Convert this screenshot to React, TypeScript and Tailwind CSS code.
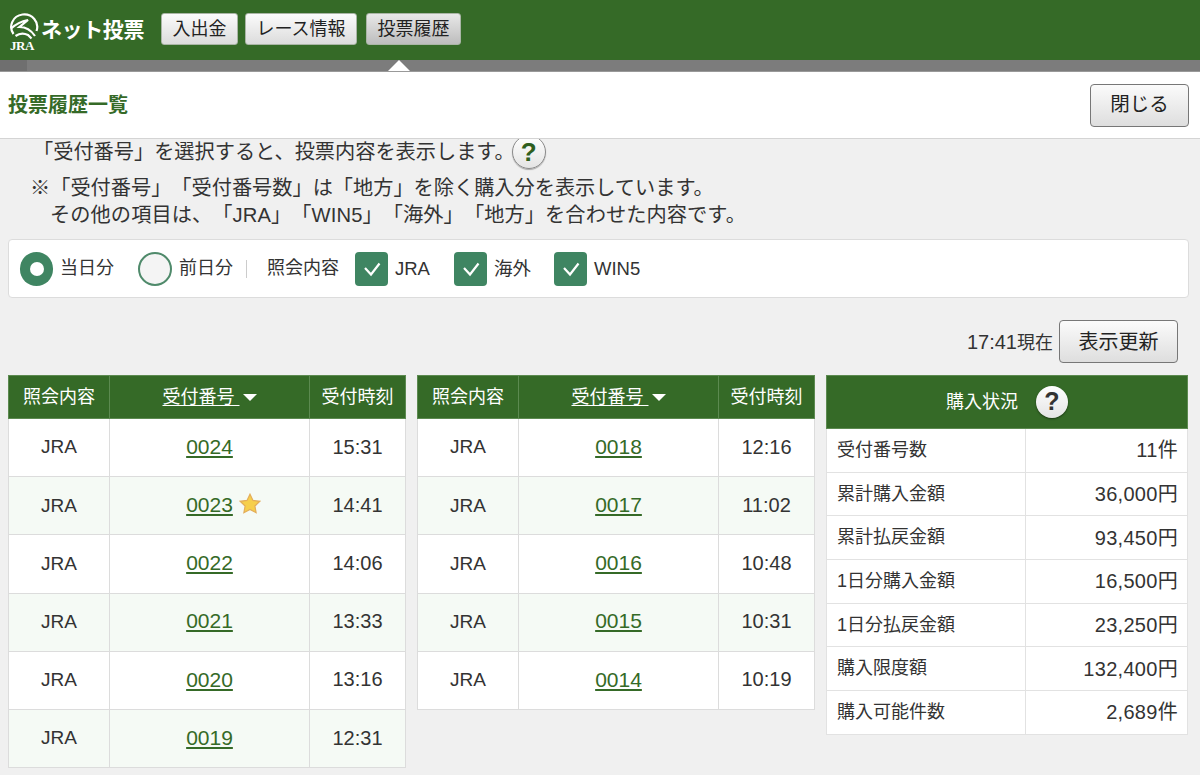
const F = { fontFamily: '"Liberation Sans","Noto Sans CJK JP",sans-serif' };

function Logo() {
  return (
    <div className="relative w-[41px] h-[60px] shrink-0">
      <svg width="32" height="30" viewBox="0 0 32 30" fill="none" stroke="#fff" strokeWidth="2.2" className="absolute left-[8px] top-[12px]">
        <path d="M5.5 22 A13 12.5 0 1 1 28.5 19" />
        <path d="M3 16.5 C8 12 13 9.5 20 8 L11.5 15 C18 15 23 18 27 24" />
        <path d="M7.5 24 C11 21.5 16 21 20 23 L23.5 26.5" />
      </svg>
      <span className="absolute left-[10px] top-[39px] text-[13px] leading-none font-bold text-white [font-family:'Liberation_Serif',serif] tracking-[-0.4px]">JRA</span>
    </div>
  );
}

function NavBtn({ label, active, w }: { label: string; active?: boolean; w: string }) {
  return (
    <button
      className={`h-[32px] rounded-[3px] text-[18px] leading-[30px] text-[#222] border border-[#aab5a6] ${w} ${
        active ? "bg-gradient-to-b from-[#e8e8e8] to-[#bdbdbd]" : "bg-gradient-to-b from-[#fbfbfb] to-[#dcdcdc]"
      }`}
    >
      {label}
    </button>
  );
}

function Help({ big }: { big?: boolean }) {
  return (
    <span
      className={`inline-flex items-center justify-center rounded-full bg-gradient-to-b from-white to-[#e4e4e4] font-bold ${
        big
          ? "w-[32px] h-[32px] text-[25px] text-[#333] shadow-[0_1px_2px_rgba(0,0,0,0.5)]"
          : "w-[34px] h-[34px] text-[26px] text-[#2f5f20] border border-[#8a8a8a] shadow-[0_1px_1px_rgba(0,0,0,0.3)]"
      }`}
    >
      ?
    </span>
  );
}

function Check({ label }: { label: string }) {
  return (
    <div className="flex items-center gap-[7px]">
      <span className="flex items-center justify-center w-[33px] h-[34px] rounded-[4px] bg-[#3f8562]">
        <svg width="20" height="16" viewBox="0 0 20 16" fill="none" stroke="#fff" strokeWidth="2.2">
          <path d="M3 7 L9 13.5 L17.5 2.5" />
        </svg>
      </span>
      <span className="text-[18.5px] text-[#333]">{label}</span>
    </div>
  );
}

function Star() {
  return (
    <svg width="22" height="21" viewBox="0 0 22 21" className="ml-[6px] mt-[4px] shrink-0">
      <path
        d="M11 1.2 L14 7.4 L20.8 8.3 L15.9 13 L17.1 19.7 L11 16.5 L4.9 19.7 L6.1 13 L1.2 8.3 L8 7.4 Z"
        fill="#f6cf4b"
        stroke="#e3ad5a"
        strokeWidth="1.2"
      />
    </svg>
  );
}

type Row = { no: string; time: string; star?: boolean };

function HistoryTable({ rows }: { rows: Row[] }) {
  return (
    <table className="w-[397px] table-fixed border-collapse text-[#333] shrink-0">
      <colgroup>
        <col className="w-[101px]" />
        <col className="w-[200px]" />
        <col className="w-[96px]" />
      </colgroup>
      <thead>
        <tr className="h-[43px] bg-[#356a27] text-white text-[18px]">
          <th className="font-normal border border-[#5c8a50]">照会内容</th>
          <th className="font-normal border border-[#5c8a50]">
            <span className="underline underline-offset-2">受付番号&nbsp;</span>
            <span className="inline-block align-middle ml-[3px] w-0 h-0 border-x-[7px] border-x-transparent border-t-[7px] border-t-white" />
          </th>
          <th className="font-normal border border-[#5c8a50]">受付時刻</th>
        </tr>
      </thead>
      <tbody>
        {rows.map((r, i) => (
          <tr key={r.no} className={`h-[58.2px] ${i % 2 ? "bg-[#f5faf5]" : "bg-white"}`}>
            <td className="border border-[#dcdcdc] text-center text-[19px]">JRA</td>
            <td className="border border-[#dcdcdc] pb-[2px]">
              <div className="flex justify-center">
                <span className="relative text-[21px]">
                  <a className="underline underline-offset-2 text-[#356a27]">{r.no}</a>
                  {r.star && (
                    <span className="absolute left-full top-0">
                      <Star />
                    </span>
                  )}
                </span>
              </div>
            </td>
            <td className="border border-[#dcdcdc] pb-[2px] text-center text-[20px]">{r.time}</td>
          </tr>
        ))}
      </tbody>
    </table>
  );
}

const left: Row[] = [
  { no: "0024", time: "15:31" },
  { no: "0023", time: "14:41", star: true },
  { no: "0022", time: "14:06" },
  { no: "0021", time: "13:33" },
  { no: "0020", time: "13:16" },
  { no: "0019", time: "12:31" },
];
const mid: Row[] = [
  { no: "0018", time: "12:16" },
  { no: "0017", time: "11:02" },
  { no: "0016", time: "10:48" },
  { no: "0015", time: "10:31" },
  { no: "0014", time: "10:19" },
];
const status = [
  ["受付番号数", "11件"],
  ["累計購入金額", "36,000円"],
  ["累計払戻金額", "93,450円"],
  ["1日分購入金額", "16,500円"],
  ["1日分払戻金額", "23,250円"],
  ["購入限度額", "132,400円"],
  ["購入可能件数", "2,689件"],
];

export default function App() {
  return (
    <div style={F} className="w-[1200px] h-[775px] overflow-hidden bg-[#f0f0f0] text-[#333]">
      <header className="h-[60px] bg-[#356a27] flex items-start">
        <Logo />
        <span className="text-[21px] tracking-[-0.4px] leading-[60px] font-bold text-white whitespace-nowrap w-[120px]">ネット投票</span>
        <nav className="flex gap-[7px] mt-[13px]">
          <NavBtn label="入出金" w="w-[77px]" />
          <NavBtn label="レース情報" w="w-[112px]" />
          <NavBtn label="投票履歴" active w="w-[95px] ml-[2px]" />
        </nav>
      </header>
      <div className="relative h-[12px] bg-[#7c7c7c] border-b border-[#999]">
        <span className="absolute left-0 top-0 w-[27px] h-[11px] bg-[#6f6f6f]" />
        <span className="absolute left-[388px] top-[0px] w-0 h-0 border-x-[11px] border-x-transparent border-b-[11px] border-b-white" />
      </div>
      <div className="relative z-10 h-[67px] bg-white border-b border-[#d4d4d4] flex items-center justify-between pl-[8px] pr-[11px]">
        <h1 className="text-[20px] font-bold text-[#356a27]">投票履歴一覧</h1>
        <button className="w-[99px] h-[43px] rounded-[4px] border border-[#777] bg-gradient-to-b from-[#fbfbfb] to-[#dedede] text-[19.5px] text-[#222]">
          閉じる
        </button>
      </div>

      <main className="px-[8px] [text-spacing-trim:space-all]">
        <div className="flex items-center h-[34px] -mt-[4px] pl-[25px] text-[20.2px] whitespace-nowrap">
          <span>「受付番号」を選択すると、投票内容を表示します。</span>
          <span className="-ml-[3px]"><Help /></span>
        </div>
        <p className="mt-[6px] pl-[22px] text-[20.2px] leading-[27px] whitespace-nowrap">
          ※「受付番号」「受付番号数」は「地方」を除く購入分を表示しています。
          <br />
          <span className="pl-[20px] tracking-[0.1px]">その他の項目は、「JRA」「WIN5」「海外」「地方」を合わせた内容です。</span>
        </p>

        <section className="mt-[10px] h-[59px] w-[1181px] rounded-[4px] bg-white border border-[#dcdcdc] flex items-center pl-[11px]">
          <div className="flex items-center gap-[7px] w-[118px]">
            <span className="flex items-center justify-center w-[33px] h-[34px] rounded-full bg-[#3f8562]">
              <span className="w-[14px] h-[14px] rounded-full bg-white" />
            </span>
            <span className="text-[18px]">当日分</span>
          </div>
          <div className="flex items-center gap-[7px] w-[108px]">
            <span className="w-[34px] h-[34px] rounded-full border-2 border-[#4f8a6b] bg-[#f4f4f4]" />
            <span className="text-[18px]">前日分</span>
          </div>
          <span className="w-px h-[18px] bg-[#ccc]" />
          <span className="text-[18px] ml-[20px] w-[88px] whitespace-nowrap">照会内容</span>
          <div className="w-[99px]"><Check label="JRA" /></div>
          <div className="w-[100px]"><Check label="海外" /></div>
          <Check label="WIN5" />
        </section>

        <div className="mt-[22px] flex items-center justify-end gap-[6px] pr-[14px] w-[1184px]">
          <span className="text-[18px]"><span className="text-[20px]">17:41</span>現在</span>
          <button className="w-[119px] h-[43px] rounded-[4px] border border-[#777] bg-gradient-to-b from-[#fbfbfb] to-[#dedede] text-[20px] text-[#222]">
            表示更新
          </button>
        </div>

        <div className="mt-[12px] flex items-start gap-[11px]">
          <HistoryTable rows={left} />
          <HistoryTable rows={mid} />
          <table className="w-[361px] table-fixed border-collapse shrink-0">
            <colgroup>
              <col className="w-[199px]" />
              <col className="w-[162px]" />
            </colgroup>
            <thead>
              <tr className="h-[53px] bg-[#356a27]">
                <th colSpan={2} className="font-normal text-white text-[18px] border border-[#5c8a50]">
                  <div className="flex items-center justify-center gap-[18px]">
                    <span>購入状況</span>
                    <Help big />
                  </div>
                </th>
              </tr>
            </thead>
            <tbody>
              {status.map(([k, v]) => (
                <tr key={k} className="h-[43.7px] bg-white">
                  <td className="border border-[#e2e2e2] pl-[10px] text-[18px]">{k}</td>
                  <td className="border border-[#e2e2e2] pr-[9px] text-right text-[20px] tracking-[0.3px]">{v}</td>
                </tr>
              ))}
            </tbody>
          </table>
        </div>
      </main>
    </div>
  );
}
